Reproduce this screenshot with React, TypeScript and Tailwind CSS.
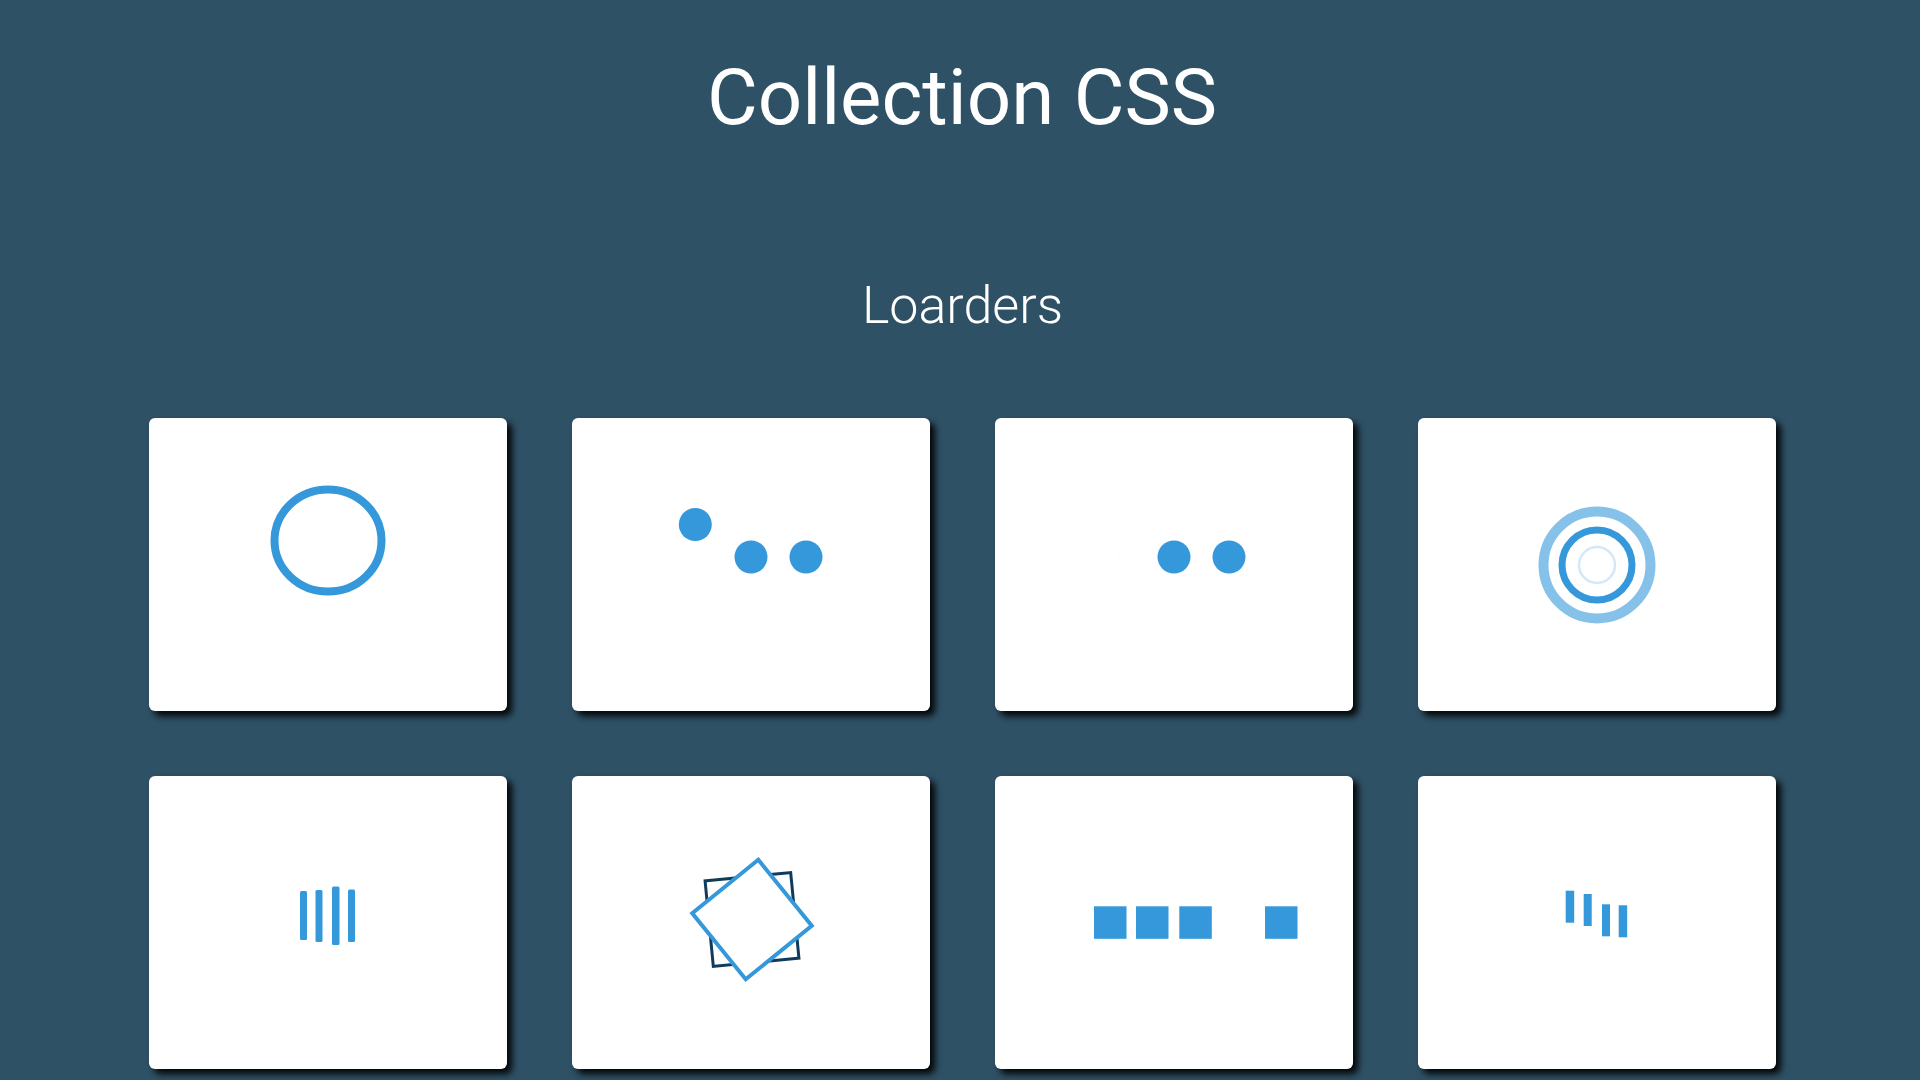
import React from "react";

const BLUE = "#3498db";

function Card({ children }: { children: React.ReactNode }) {
  return (
    <div className="w-[358px] h-[293px] bg-white rounded-md shadow-[5px_5px_7px_rgba(0,0,0,0.95)]">
      <svg width="358" height="293" viewBox="0 0 358 293" className="block">
        {children}
      </svg>
    </div>
  );
}

export default function App() {
  return (
    <div
      className="min-h-[1080px] w-full bg-[#2f5166] text-white overflow-hidden"
      style={{ fontFamily: "Roboto, 'Noto Sans', sans-serif" }}
    >
      <h1 className="pt-[59px] pl-[4px] text-center text-[78px] leading-[78px] font-normal">
        Collection CSS
      </h1>
      <h2 className="mt-[143px] pl-[5px] text-center text-[52px] leading-[52px] font-light">
        Loarders
      </h2>
      <div className="mt-[86px] pl-[149px] grid grid-cols-[repeat(4,358px)] gap-[65px]">
        <Card>
          <ellipse cx="179" cy="122.5" rx="53.5" ry="51" fill="none" stroke={BLUE} strokeWidth="8" />
        </Card>
        <Card>
          <circle cx="123.3" cy="106.5" r="16.5" fill={BLUE} />
          <circle cx="179" cy="139" r="16.5" fill={BLUE} />
          <circle cx="234" cy="139" r="16.5" fill={BLUE} />
        </Card>
        <Card>
          <circle cx="124" cy="139" r="1" fill={BLUE} opacity="0.05" />
          <circle cx="179" cy="139" r="16.5" fill={BLUE} />
          <circle cx="234" cy="139" r="16.5" fill={BLUE} />
        </Card>
        <Card>
          <circle cx="179" cy="147" r="53.5" fill="none" stroke="#85c1e9" strokeWidth="10" />
          <circle cx="179" cy="147" r="35" fill="none" stroke={BLUE} strokeWidth="7" />
          <circle cx="179" cy="147" r="18" fill="none" stroke="#d4e8f7" strokeWidth="2.5" />
        </Card>
        <Card>
          <rect x="151" y="115" width="7" height="49" rx="1.5" fill={BLUE} />
          <rect x="166.5" y="114" width="7" height="52" rx="1.5" fill={BLUE} />
          <rect x="183" y="110.5" width="7.5" height="58.5" rx="1.5" fill={BLUE} />
          <rect x="199" y="113.5" width="7" height="52.5" rx="1.5" fill={BLUE} />
        </Card>
        <Card>
          <g transform="translate(180 143.5) rotate(-5.5)">
            <rect x="-43" y="-43" width="86" height="86" fill="none" stroke="#0f3b5c" strokeWidth="3" />
          </g>
          <g transform="translate(180 143.5) rotate(51)">
            <rect x="-42.5" y="-42.5" width="85" height="85" fill="#ffffff" stroke={BLUE} strokeWidth="4" />
          </g>
        </Card>
        <Card>
          <rect x="99" y="130.3" width="32.5" height="32.5" fill={BLUE} />
          <rect x="141" y="130.3" width="32.5" height="32.5" fill={BLUE} />
          <rect x="184.3" y="130.3" width="32.5" height="32.5" fill={BLUE} />
          <rect x="270" y="130.3" width="32.5" height="32.5" fill={BLUE} />
        </Card>
        <Card>
          <rect x="147.7" y="114.7" width="8.5" height="32" fill={BLUE} />
          <rect x="165.7" y="118" width="8" height="32" fill={BLUE} />
          <rect x="184" y="128.3" width="8" height="32" fill={BLUE} />
          <rect x="200.7" y="129.3" width="8.5" height="32" fill={BLUE} />
        </Card>
      </div>
    </div>
  );
}
